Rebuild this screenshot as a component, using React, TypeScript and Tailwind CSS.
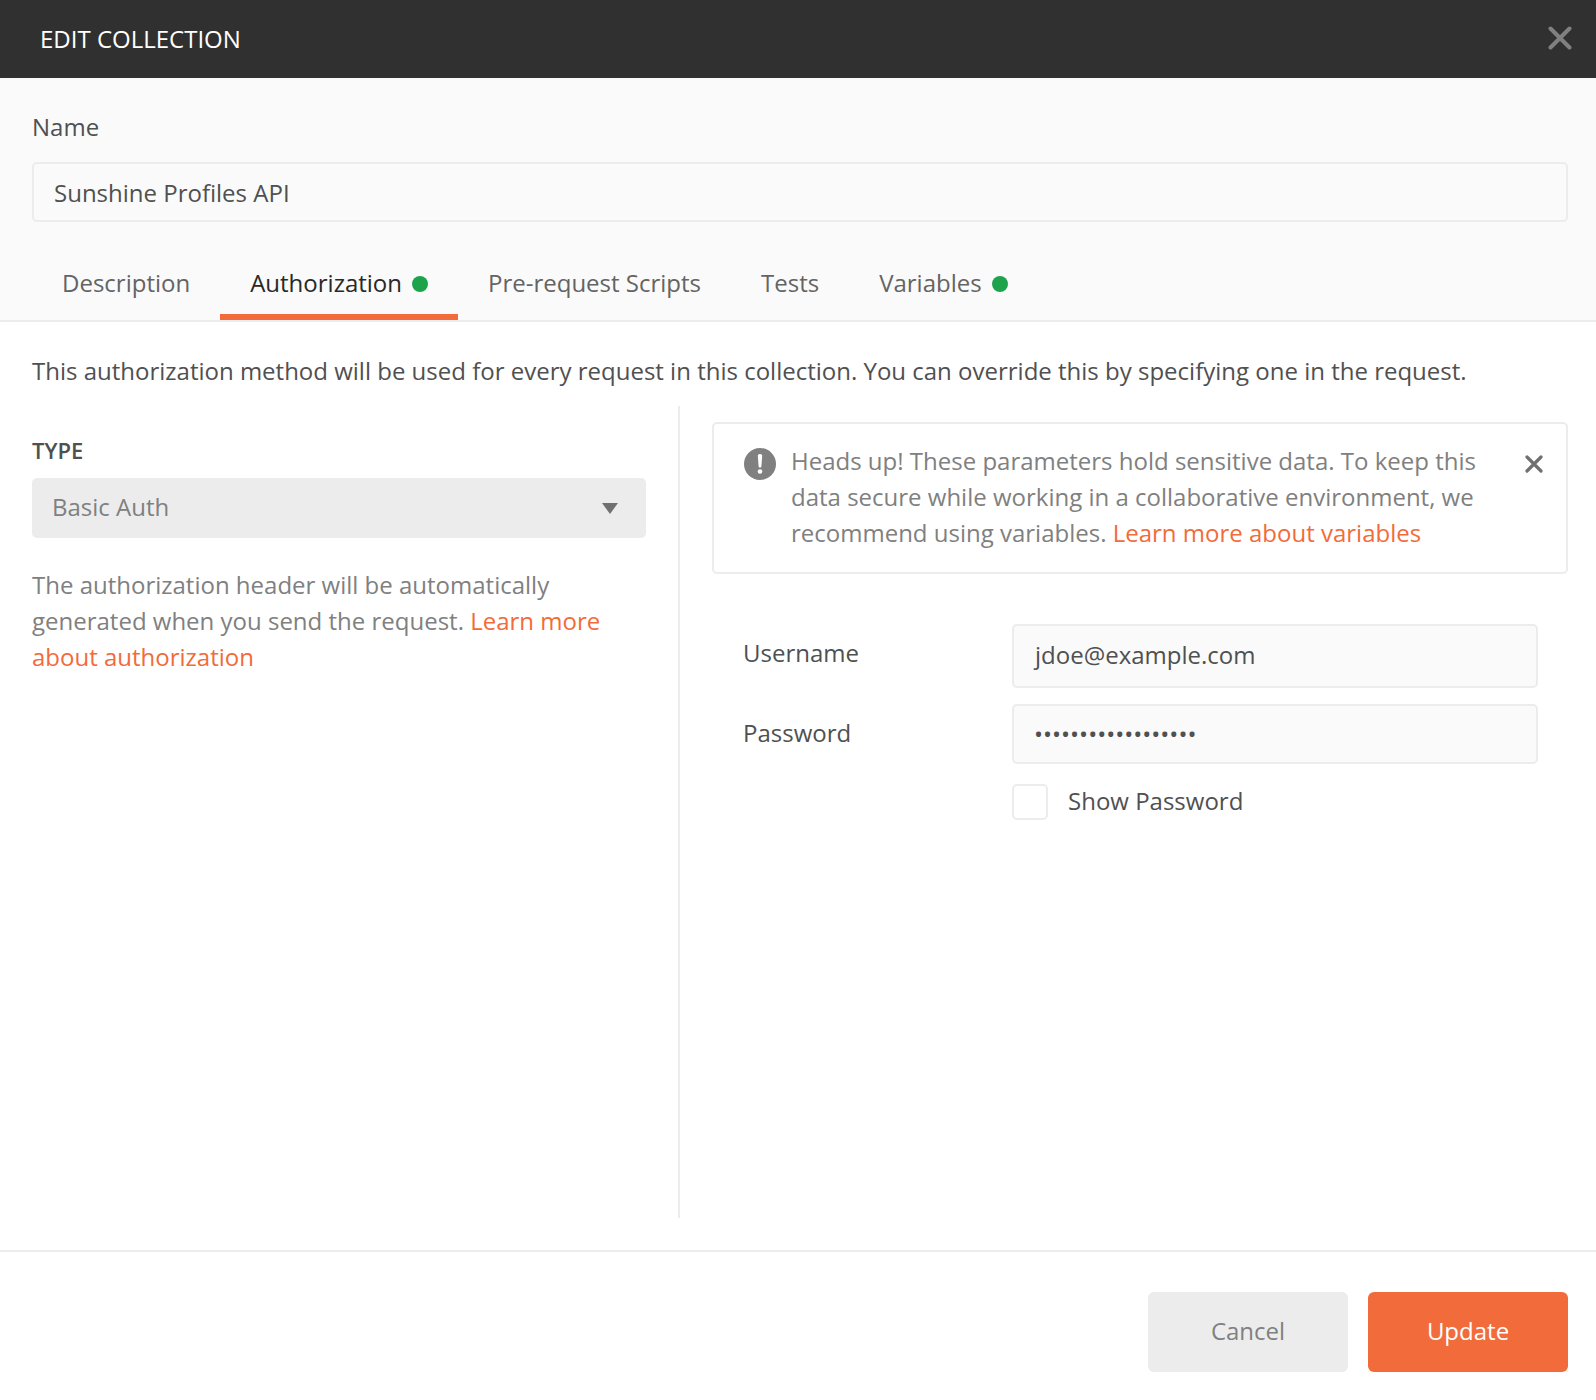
import React from 'react';

const FieldBorder = 'border-2 border-[#ececec] rounded-[5px] bg-[#fafafa]';

function Tab({ label, active, dot }: { label: string; active?: boolean; dot?: boolean }) {
  return (
    <div className={`h-[64px] px-[30px] flex items-center gap-[10px] pb-[4px] border-b-[6px] ${active ? 'border-[#f26b3a] text-[#282828]' : 'border-transparent text-[#646464]'}`}>
      <span>{label}</span>
      {dot && <span className="w-4 h-4 mt-[1px] rounded-full bg-[#1ea34d]" />}
    </div>
  );
}

export default function App() {
  return (
    <div className="w-[1596px] h-[1400px] bg-white flex flex-col overflow-hidden text-[24px] leading-[36px] text-[#505050] font-['Open_Sans',sans-serif]">
      {/* Title bar */}
      <header className="h-[78px] shrink-0 bg-[#303030] flex items-center justify-between pl-10 pr-6 text-white">
        <h1 className="font-normal text-[24px]">EDIT COLLECTION</h1>
        <svg width="24" height="24" viewBox="0 0 24 24" className="text-[#808080] mb-[3px]" fill="none" stroke="currentColor" strokeWidth="4" strokeLinecap="round">
          <path d="M2.5 2.5 L21.5 21.5 M21.5 2.5 L2.5 21.5" />
        </svg>
      </header>

      {/* Name and tabs */}
      <section className="shrink-0 h-[244px] bg-[#fafafa] border-b-2 border-[#ececec] flex flex-col">
        <div className="pl-8 pr-7 pt-[31px]">
          <label className="block text-[#505050]">Name</label>
          <div className={`mt-[17px] h-[60px] px-5 pt-[1px] flex items-center ${FieldBorder}`}>Sunshine Profiles API</div>
        </div>
        <nav className="mt-auto pl-8 flex">
          <Tab label="Description" />
          <Tab label="Authorization" active dot />
          <Tab label="Pre-request Scripts" />
          <Tab label="Tests" />
          <Tab label="Variables" dot />
        </nav>
      </section>

      {/* Auth body */}
      <main className="flex-1 min-h-0 flex flex-col pt-[31px]">
        <p className="px-8">This authorization method will be used for every request in this collection. You can override this by specifying one in the request.</p>
        <div className="mt-[17px] flex h-[812px]">
          <div className="w-[680px] shrink-0 border-r-2 border-[#ececec] pl-8 pr-[32px] pt-[26px]">
            <div className="font-semibold text-[22px] text-[#505050]">TYPE</div>
            <div className="mt-[10px] h-[60px] w-[614px] rounded-[5px] bg-[#ececec] pl-[20px] pr-[28px] pb-[2px] flex items-center justify-between text-[#808080]">
              <span>Basic Auth</span>
              <svg width="16" height="11" viewBox="0 0 16 11" className="fill-[#707070] mt-[2px]"><path d="M0 0 H16 L8 11 Z" /></svg>
            </div>
            <p className="mt-[29px] text-[#808080]">
              The authorization header will be automatically generated when you send the request. <span className="text-[#f26b3a]">Learn more about authorization</span>
            </p>
          </div>

          <div className="flex-1 pl-[32px] pr-[28px] pt-[16px]">
            <div className="relative h-[152px] rounded-[5px] border-2 border-[#ececec] pl-[30px] pr-[88px] pt-[19px] flex gap-[15px] text-[#808080]">
              <svg width="32" height="32" viewBox="0 0 32 32" className="shrink-0 mt-[5px]">
                <circle cx="16" cy="16" r="16" fill="#808080" />
                <path d="M13.8 7.5 a2.2 1.5 0 0 1 4.4 0 L17.4 18.5 a1.4 1 0 0 1 -2.8 0 Z" fill="#fff" />
                <circle cx="16" cy="23.5" r="2.3" fill="#fff" />
              </svg>
              <p>Heads up! These parameters hold sensitive data. To keep this data secure while working in a collaborative environment, we recommend using variables. <span className="text-[#f26b3a]">Learn more about variables</span></p>
              <svg width="18" height="18" viewBox="0 0 18 18" className="absolute right-[23px] top-[31px]" fill="none" stroke="#707070" strokeWidth="3.2" strokeLinecap="round">
                <path d="M2 2 L16 16 M16 2 L2 16" />
              </svg>
            </div>

            <div className="mt-[50px] px-[30px]">
              <div className="flex items-start">
                <label className="w-[270px] shrink-0 pl-[1px] pt-[11px]">Username</label>
                <div className={`flex-1 h-[64px] pl-[21px] pb-[2px] flex items-center ${FieldBorder}`}>jdoe@example.com</div>
              </div>
              <div className="mt-[16px] flex items-start">
                <label className="w-[270px] shrink-0 pl-[1px] pt-[11px]">Password</label>
                <div className={`flex-1 h-[60px] pl-[20px] flex items-center ${FieldBorder}`}>
                  <input type="password" readOnly value="supersecretpasswor" className="w-full bg-transparent outline-none text-[#505050] text-[24px]" />
                </div>
              </div>
              <div className="mt-[19px] ml-[270px] flex items-center gap-[20px]">
                <span className="w-[36px] h-[36px] rounded-[5px] border-2 border-[#ececec] bg-white" />
                <span className="pb-[2px]">Show Password</span>
              </div>
            </div>
          </div>
        </div>
      </main>

      {/* Footer actions */}
      <footer className="shrink-0 h-[150px] border-t-2 border-[#ececec] flex justify-end items-start gap-5 pr-7 pt-10">
        <button className="w-[200px] h-[80px] pb-[2px] rounded-[6px] bg-[#ececec] text-[#808080]">Cancel</button>
        <button className="w-[200px] h-[80px] pb-[2px] rounded-[6px] bg-[#f26b3a] text-white">Update</button>
      </footer>
    </div>
  );
}
